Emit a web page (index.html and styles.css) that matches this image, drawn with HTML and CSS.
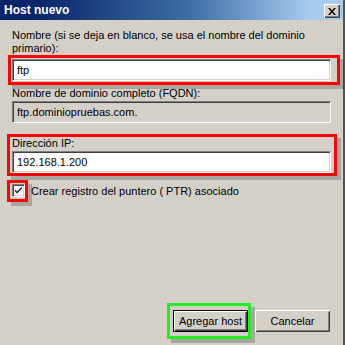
FILE: index.html
```html
<!DOCTYPE html>
<html lang="es">
<head>
    <meta charset="UTF-8">
    <meta name="viewport" content="width=device-width, initial-scale=1.0">
    <title>Host nuevo</title>
    <link rel="stylesheet" href="styles.css">
</head>
<body>
    <div class="window">
        <div class="title-bar">
            <span class="title">Host nuevo</span>
            <button class="close-button" aria-label="Cerrar">
                <svg width="8" height="7" viewBox="0 0 8 7">
                    <path d="M0 0h2l2 2.5 2-2.5h2l-3 3.5 3 3.5h-2l-2-2.5-2 2.5h-2l3-3.5z" fill="#000"/>
                </svg>
            </button>
        </div>

        <div class="content">
            <!-- Nombre del host -->
            <label class="label" for="hostName">Nombre (si se deja en blanco, se usa el nombre del dominio primario):</label>
            <div class="mark mark-name">
                <input id="hostName" class="text-input" type="text" value="ftp">
            </div>

            <label class="label label-fqdn">Nombre de dominio completo (FQDN):</label>
            <div class="text-input readonly">ftp.dominiopruebas.com.</div>

            <!-- Dirección IP -->
            <div class="mark mark-ip">
                <label class="label" for="hostIp">Dirección IP:</label>
                <input id="hostIp" class="text-input" type="text" value="192.168.1.200">
            </div>

            <div class="check-row">
                <span class="mark mark-check">
                    <span class="checkbox">
                        <svg width="9" height="9" viewBox="0 0 9 9">
                            <path d="M1 3.5l2 2 5-5v2l-5 5-2-2z" fill="#141a3c"/>
                        </svg>
                    </span>
                </span>
                <span class="check-label">Crear registro del puntero ( PTR) asociado</span>
            </div>
        </div>

        <div class="buttons">
            <span class="mark-green">
                <button class="button default-button">Agregar host</button>
            </span>
            <button class="button">Cancelar</button>
        </div>
    </div>
</body>
</html>
```

FILE: styles.css
```css
body {
    margin: 0;
    font-family: "Liberation Sans", Arial, sans-serif;
    font-size: 11px;
    color: #000000;
    background-color: #d4d0c8;
}
.window {
    width: 345px;
    height: 345px;
    box-sizing: border-box;
    border-right: 2px solid #55534f;
    background-color: #d4d0c8;
    display: flex;
    flex-direction: column;
}
.title-bar {
    height: 20px;
    display: flex;
    justify-content: space-between;
    align-items: center;
    padding: 0 3px 0 4px;
    background: linear-gradient(to right, #0a246a 10%, #3a6ea5 55%, #a6caf0 90%);
}
.title {
    color: #ffffff;
    font-weight: bold;
    font-size: 12px;
}
.close-button {
    width: 16px;
    height: 14px;
    margin-top: 2px;
    padding: 0;
    border: none;
    display: flex;
    justify-content: center;
    align-items: center;
    background-color: #d4d0c8;
    box-shadow: inset 1px 1px #ffffff, inset -1px -1px #404040, inset -2px -2px #808080;
}
.content {
    padding: 9px 12px 0 12px;
    display: flex;
    flex-direction: column;
}
.label {
    display: block;
    line-height: 13px;
}
.label-fqdn {
    margin-top: 2px;
}
.text-input {
    display: block;
    box-sizing: border-box;
    width: 100%;
    height: 22px;
    margin: 1px 0 0 0;
    padding: 0 0 0 4px;
    font-family: "Liberation Sans", Arial, sans-serif;
    font-size: 11px;
    line-height: 18px;
    color: #000000;
    background-color: #ffffff;
    border: 1px solid;
    border-color: #808080 #ffffff #ffffff #808080;
    box-shadow: inset 1px 1px #404040, inset -1px -1px #d4d0c8;
    outline: none;
}
.text-input.readonly {
    padding-top: 1px;
    background-color: #d4d0c8;
}
.mark {
    border: 3px solid #ff0000;
    box-shadow: 4px 4px 0 rgba(0, 0, 0, 0.2);
}
.mark-name {
    margin: 0 -9px 0 -4px;
    padding: 0 6px 1px 1px;
}
.mark-ip {
    margin: 11px -6px 0 -5px;
    padding: 0 3px 0 2px;
}
.check-row {
    display: flex;
    align-items: center;
    margin-top: 4px;
}
.mark-check {
    margin-left: -5px;
    padding: 1px 0 2px 2px;
    display: flex;
}
.checkbox {
    width: 13px;
    height: 13px;
    box-sizing: border-box;
    display: flex;
    justify-content: center;
    align-items: center;
    background-color: #ffffff;
    border: 1px solid;
    border-color: #808080 #ffffff #ffffff #808080;
    box-shadow: inset 1px 1px #404040, inset -1px -1px #d4d0c8;
}
.check-label {
    margin-left: 3px;
}
.buttons {
    margin-top: auto;
    display: flex;
    justify-content: flex-end;
    align-items: center;
    padding: 0 13px 6px 0;
}
.mark-green {
    display: flex;
    border: 3px solid #22ee22;
    padding: 4px 0 4px 3px;
    box-shadow: 4px 4px 0 rgba(0, 0, 0, 0.2);
}
.button {
    width: 75px;
    height: 22px;
    margin-left: 4px;
    padding: 0;
    font-family: "Liberation Sans", Arial, sans-serif;
    font-size: 11px;
    color: #000000;
    background-color: #d4d0c8;
    border: none;
    box-shadow: inset 1px 1px #ffffff, inset -1px -1px #404040, inset 2px 2px #d4d0c8, inset -2px -2px #808080;
}
.default-button {
    margin-left: 0;
    border: 1px solid #000000;
    box-shadow: inset 1px 1px #ffffff, inset -1px -1px #404040, inset -2px -2px #808080;
}
```
